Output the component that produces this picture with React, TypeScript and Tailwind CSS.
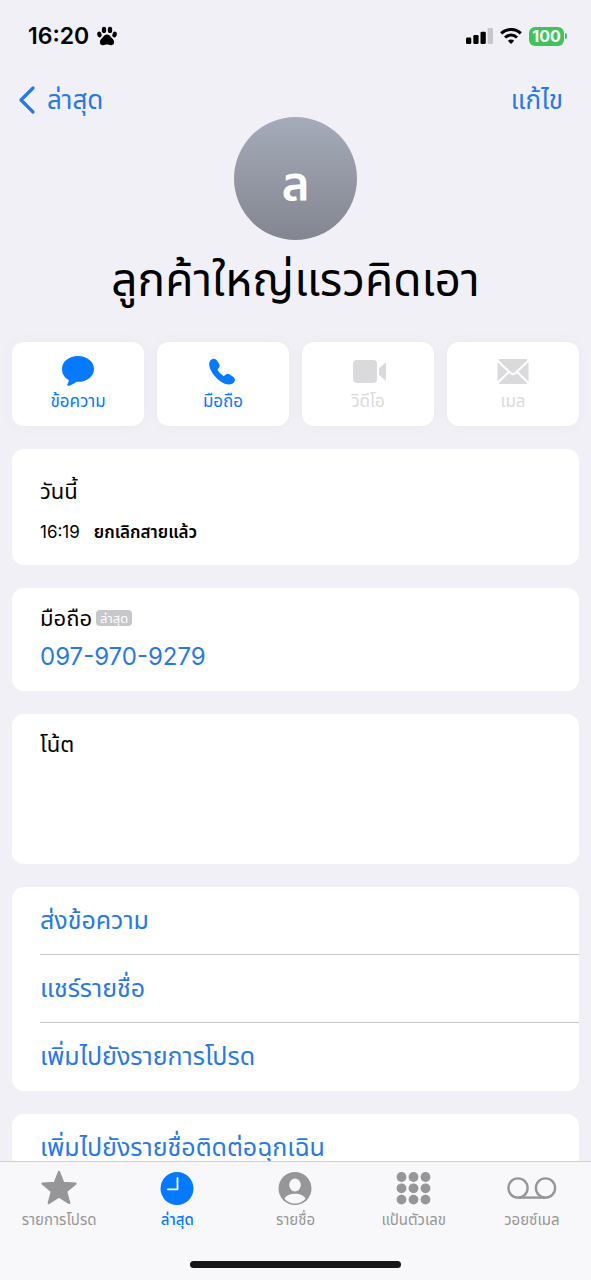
import type { ReactNode } from 'react'

const actions = [
  { label: 'ข้อความ', icon: <MessageIcon />, disabled: false },
  { label: 'มือถือ', icon: <PhoneIcon />, disabled: false },
  { label: 'วิดีโอ', icon: <VideoIcon />, disabled: true },
  { label: 'เมล', icon: <MailIcon />, disabled: true },
]

const tabs = [
  { label: 'รายการโปรด', icon: <StarIcon />, active: false },
  { label: 'ล่าสุด', icon: <ClockIcon />, active: true },
  { label: 'รายชื่อ', icon: <PersonIcon />, active: false },
  { label: 'แป้นตัวเลข', icon: <KeypadIcon />, active: false },
  { label: 'วอยซ์เมล', icon: <VoicemailIcon />, active: false },
]

function MessageIcon() {
  return (
    <svg className="h-8 w-8" viewBox="0 0 32 32" fill="currentColor" aria-hidden="true">
      <path d="M16 0c8.900 0 16 5.500 16 12.900s-7.100 12.900-16 12.900h-1.500c-2.200 1.800-4.600 3.200-7.400 3.900-1.600.4-2.400-.6-1.500-1.900.8-1.200 1.300-2.500 1-3.900C2.500 21.700 0 17.900 0 12.900 0 5.500 7.100 0 16 0Z" />
    </svg>
  )
}

function PhoneIcon() {
  return (
    <svg className="h-8 w-8" viewBox="0 0 32 32" fill="currentColor" aria-hidden="true">
      <path d="M2.200 8.200c0-2.500 1-3.900 2.700-4.900 1.700-1 3.700-.6 4.900 1l2.300 3.400c1 1.600.8 3-.3 4.200l-.9 1c-.4.500-.4.900-.1 1.400 1.400 2.300 3.200 4.100 5.400 5.400.5.300.9.300 1.400-.1l1-.9c1.200-1.100 2.700-1.200 4.200-.2l3.600 2.400c1.700 1.200 2.100 3.200.9 4.900-1.200 1.800-3.100 2.800-5.700 2.700C13.800 28.200 2.500 17 2.200 8.200Z" />
    </svg>
  )
}

function VideoIcon() {
  return (
    <svg className="h-8 w-9" viewBox="0 0 36 32" fill="currentColor" aria-hidden="true">
      <rect x="3" y="4" width="24" height="23" rx="4" />
      <path d="M29 12.500 35.700 6.500c.6-.6 1.300-.2 1.300.6v16.900c0 .8-.7 1.200-1.300.6L29 18.800Z" />
    </svg>
  )
}

function MailIcon() {
  return (
    <svg className="h-8 w-8" viewBox="0 0 32 32" aria-hidden="true">
      <rect x=".5" y="3" width="31" height="25" rx="3" fill="currentColor" />
      <g fill="none" stroke="#fff" strokeWidth="2">
        <path d="m0 4 13.500 13c1.600 1.500 3.400 1.500 5 0L32 4" />
        <path d="m0 27.500 12-11.700M32 27.500 20 15.800" />
      </g>
    </svg>
  )
}

function StarIcon() {
  return (
    <svg className="h-9 w-9" viewBox="0 0 36 36" fill="currentColor" aria-hidden="true">
      <path
        d="m18 2 4.300 10.900 12.200.7-9.400 7.800 3.200 11.600L18 26.600 7.700 33l3.200-11.600-9.400-7.800 12.200-.7Z"
        stroke="currentColor"
        strokeWidth="2.200"
        strokeLinejoin="round"
      />
    </svg>
  )
}

function ClockIcon() {
  return (
    <svg className="h-9 w-9" viewBox="0 0 36 36" aria-hidden="true">
      <circle cx="18" cy="18.500" r="16.500" fill="currentColor" />
      <path d="M18.500 8v11.300H9" fill="none" stroke="#fff" strokeWidth="1.800" strokeLinecap="round" strokeLinejoin="round" />
    </svg>
  )
}

function PersonIcon() {
  return (
    <svg className="h-9 w-9" viewBox="0 0 36 36" aria-hidden="true">
      <circle cx="18" cy="18.500" r="16.500" fill="currentColor" />
      <ellipse cx="18" cy="15" rx="5.800" ry="6.500" fill="#f8f8fa" />
      <path d="M7.500 28.800c1.500-3.300 5.600-5 10.500-5s9 1.700 10.500 5c-2.500 2.900-6.300 4.700-10.500 4.700s-8-1.800-10.500-4.700Z" fill="#f8f8fa" />
    </svg>
  )
}

function KeypadIcon() {
  return (
    <svg className="h-9 w-9" viewBox="0 0 36 36" fill="currentColor" aria-hidden="true">
      {[7, 18.3, 29.6].map((cy) => [5.5, 17.5, 29.5].map((cx) => <circle key={`${cx}-${cy}`} cx={cx} cy={cy} r="4.900" />))}
    </svg>
  )
}

function VoicemailIcon() {
  return (
    <svg className="h-9 w-[50px]" viewBox="0 0 50 36" fill="none" stroke="currentColor" strokeWidth="2.400" aria-hidden="true">
      <circle cx="11" cy="18" r="9.600" />
      <circle cx="38.500" cy="18" r="9.600" />
      <path d="M11 27.600h27.500" />
    </svg>
  )
}

function PawIcon() {
  return (
    <svg className="h-5 w-5" viewBox="0 0 20 20" aria-hidden="true">
      <ellipse cx="2.400" cy="8.500" rx="2.100" ry="2.900" transform="rotate(-18 2.400 8.500)" />
      <ellipse cx="7" cy="3.900" rx="2.200" ry="3.200" />
      <ellipse cx="13" cy="3.900" rx="2.200" ry="3.200" />
      <ellipse cx="17.600" cy="8.500" rx="2.100" ry="2.900" transform="rotate(18 17.600 8.500)" />
      <path d="M10 8.500c2.100 0 3 1.400 4.100 2.800 1.200 1.500 3 2.500 3 4.900 0 2.100-1.500 3.200-3.300 3-1.400-.1-2.300-.6-3.800-.6s-2.400.5-3.800.6c-1.800.2-3.300-.9-3.300-3 0-2.400 1.800-3.400 3-4.900C7 9.900 7.900 8.500 10 8.500Z" />
    </svg>
  )
}

function StatusBar() {
  return (
    <div className="flex h-[72px] items-center justify-between pl-7 pr-6">
      <div className="flex items-center gap-2 text-black">
        <span className="text-[23px] font-semibold leading-7">16:20</span>
        <PawIcon />
      </div>
      <div className="flex items-center gap-[7px]">
        <svg className="h-4 w-[27px]" viewBox="0 0 27 16" aria-hidden="true">
          <rect x="0" y="9.500" width="5.300" height="6.500" rx="1.300" />
          <rect x="7.300" y="7" width="5.300" height="9" rx="1.300" />
          <rect x="14.500" y="3.800" width="5.300" height="12.200" rx="1.300" />
          <rect x="21.700" y="0" width="5.300" height="16" rx="1.300" fill="#c7c7cb" />
        </svg>
        <svg className="h-4 w-[22px]" viewBox="0 0 22 16" fill="none" stroke="#000" strokeWidth="3" aria-hidden="true">
          <path d="M1.200 5.300c5.500-5.100 14.100-5.100 19.600 0" />
          <path d="M5 9.500c3.400-3.200 8.600-3.200 12 0" />
          <path d="M11 16 7.800 12.800c1.800-1.700 4.600-1.700 6.400 0Z" fill="#000" stroke="none" />
        </svg>
        <div className="flex items-center gap-px">
          <span className="flex h-[19px] w-[35px] items-center justify-center rounded-md bg-[#3fc45c] text-base font-bold text-white">
            100
          </span>
          <span className="h-1.5 w-0.5 rounded-r-full bg-[#3fc45c]" />
        </div>
      </div>
    </div>
  )
}

function Card({ children, className = '' }: { children: ReactNode; className?: string }) {
  return <section className={`rounded-xl bg-white pl-7 ${className}`}>{children}</section>
}

function LinkRow({ children }: { children: ReactNode }) {
  return (
    <button
      type="button"
      className="flex h-[68px] w-full items-center border-b border-[#c6c6c8] text-left text-[25px] text-[#2879e4] last:border-b-0"
    >
      {children}
    </button>
  )
}

export default function App() {
  return (
    <div
      lang="th"
      className="flex h-screen flex-col bg-[#f1f0f6] font-[Inter,'Noto_Sans_Thai','Noto_Sans',sans-serif] text-black"
    >
      <StatusBar />

      <main className="min-h-0 flex-1 overflow-y-auto px-3 [scrollbar-width:none]">
        <nav className="flex items-center justify-between pt-[11px] text-[26px] leading-[34px] text-[#2879e4]">
          <a href="#recents" className="flex items-center gap-3 pl-[7px]">
            <svg className="h-7 w-4" viewBox="0 0 16 28" fill="none" stroke="currentColor" strokeWidth="3.200" strokeLinecap="round" strokeLinejoin="round" aria-hidden="true">
              <path d="M14 2 2 14l12 12" />
            </svg>
            ล่าสุด
          </a>
          <button type="button" className="pr-4">
            แก้ไข
          </button>
        </nav>

        <header className="flex flex-col items-center">
          <div className="flex h-[123px] w-[123px] items-center justify-center rounded-full bg-linear-to-b from-[#a5abb9] to-[#838690] pt-2 text-5xl font-semibold text-white">
            ล
          </div>
          <h1 className="h-[102px] pt-2 text-[46px] leading-[62px]">ลูกค้าใหญ่แรวคิดเอา</h1>
        </header>

        <div className="grid grid-cols-4 gap-[13px]">
          {actions.map((action) => (
            <button
              key={action.label}
              type="button"
              disabled={action.disabled}
              className={`flex h-[84px] flex-col items-center rounded-xl bg-white pt-3.5 shadow-[0_0_16px_rgba(0,0,0,0.03)] ${
                action.disabled ? 'text-[#dadadc]' : 'text-[#057aff]'
              }`}
            >
              {action.icon}
              <span className="text-[17px] leading-[26px]">{action.label}</span>
            </button>
          ))}
        </div>

        <div className="mt-[23px] flex flex-col gap-[23px]">
          <Card className="h-[116px] pt-6">
            <h2 className="text-[22px] leading-9">วันนี้</h2>
            <p className="flex items-center gap-3.5 pt-2 text-[17px] leading-[30px]">
              <span>16:19</span>
              <span className="font-semibold">ยกเลิกสายแล้ว</span>
            </p>
          </Card>

          <Card className="h-[103px] pt-3">
            <div className="flex items-center gap-1">
              <h2 className="text-[22px] leading-9">มือถือ</h2>
              <span className="flex h-4 items-center rounded bg-[#c6c6cb] px-1 text-[13px] leading-4 text-white">ล่าสุด</span>
            </div>
            <a href="tel:0979709279" className="block text-2xl leading-[42px] text-[#2879e4]">
              097-970-9279
            </a>
          </Card>

          <Card className="h-[150px] pt-3">
            <h2 className="text-[22px] leading-9">โน้ต</h2>
          </Card>

          <Card>
            <LinkRow>ส่งข้อความ</LinkRow>
            <LinkRow>แชร์รายชื่อ</LinkRow>
            <LinkRow>เพิ่มไปยังรายการโปรด</LinkRow>
          </Card>

          <Card>
            <LinkRow>เพิ่มไปยังรายชื่อติดต่อฉุกเฉิน</LinkRow>
          </Card>
        </div>
      </main>

      <footer className="border-t border-[#d0d0d3] bg-[#f8f8fa]">
        <nav className="grid grid-cols-5 pt-2">
          {tabs.map((tab) => (
            <button
              key={tab.label}
              type="button"
              aria-current={tab.active ? 'page' : undefined}
              className={`flex flex-col items-center ${tab.active ? 'font-medium text-[#057aff]' : 'text-[#969698]'}`}
            >
              {tab.icon}
              <span className="text-[15px] leading-7">{tab.label}</span>
            </button>
          ))}
        </nav>
        <div className="flex justify-center pb-3 pt-[27px]">
          <div className="h-[7px] w-[211px] rounded-full bg-[#151515]" />
        </div>
      </footer>
    </div>
  )
}
